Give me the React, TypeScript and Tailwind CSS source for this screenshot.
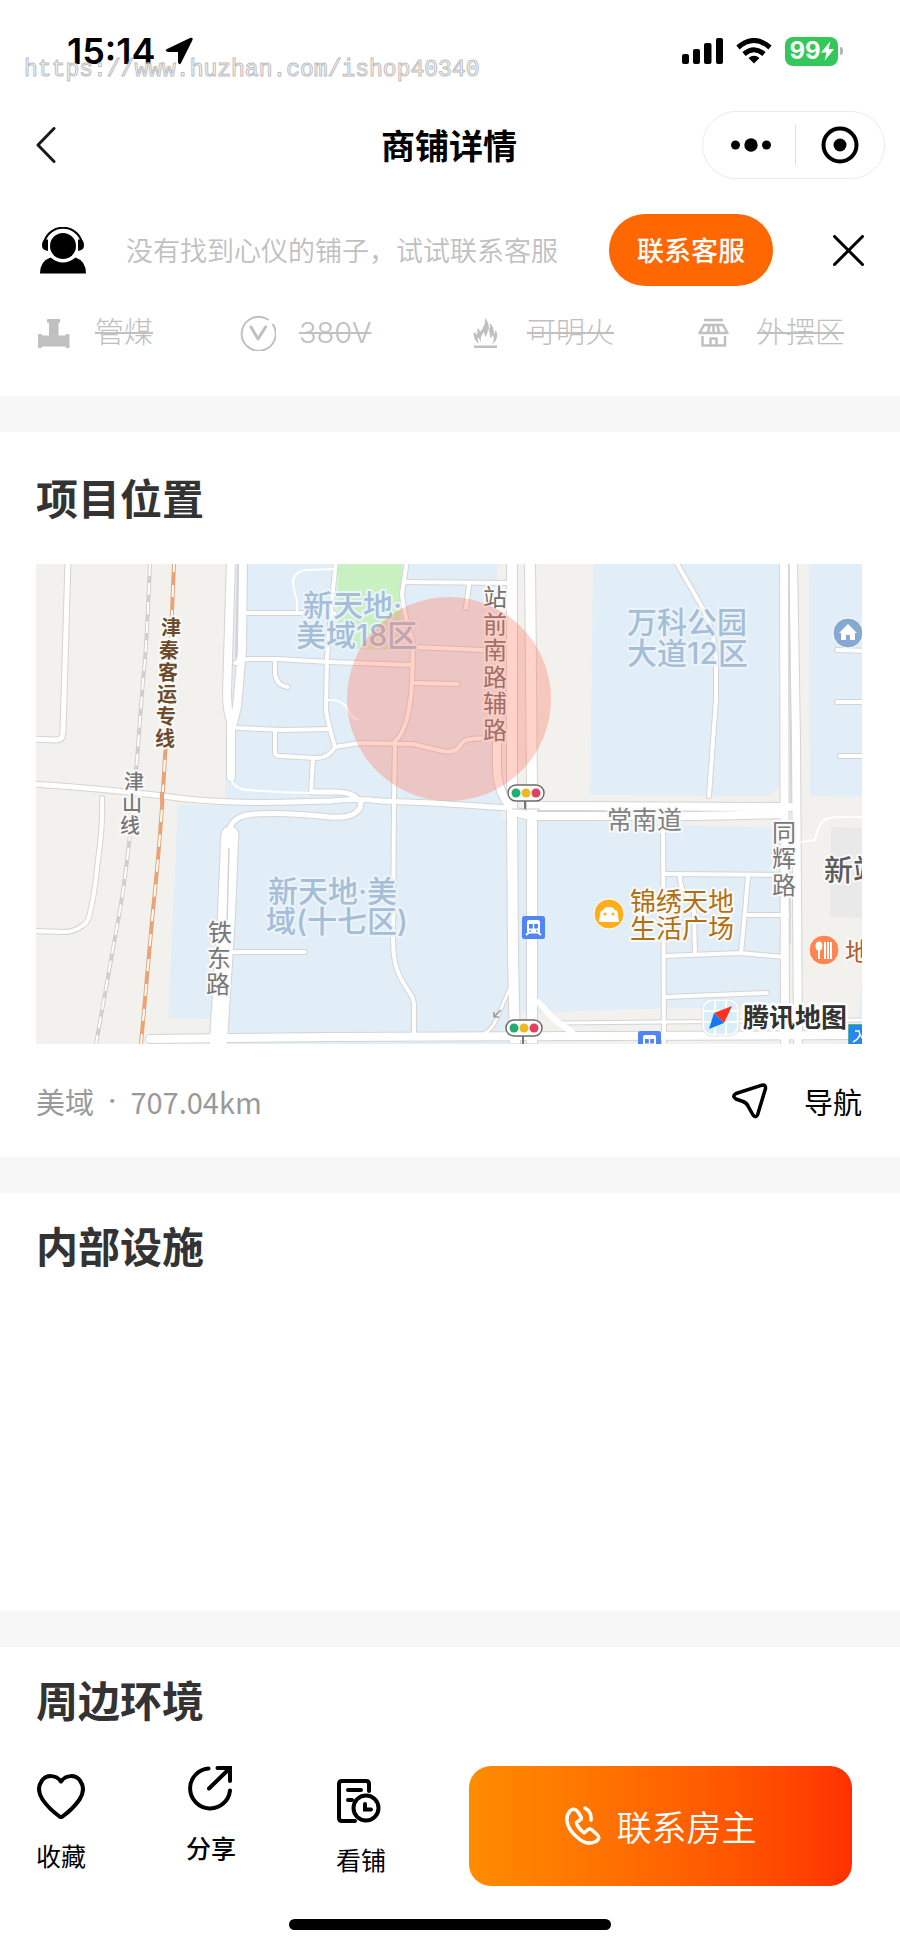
import React from "react";

type Road = { d: string; w: number };

const ROADS: Road[] = [
  { d: "M32 -4L27 168Q27 176 20 176L-4 175", w: 5 },
  { d: "M66 234Q67 262 62 296Q59 328 54 349Q52 359 46 362Q38 368 28 368L-4 367", w: 4 },
  { d: "M-4 220C60 224 110 230 127 232C180 240 230 239 294 237Q324 234 345 237L397 239L473 244", w: 5 },
  { d: "M193 268Q195 252 218 250Q250 248 294 253Q324 255 325 239Q318 227 297 228L276 228", w: 5 },
  { d: "M211 49H298", w: 4 },
  { d: "M199 99Q205 95 216 95H241L294 98L374 101", w: 4 },
  { d: "M239 98V110Q241 122 252 123", w: 4 },
  { d: "M201 164L247 166L294 165", w: 4 },
  { d: "M239 166V188Q239 192 244 192L279 194Q292 195 299 183L324 179L377 180L406 187Q420 190 425 180Q429 175 435 175L450 174", w: 4 },
  { d: "M277 196L275 228", w: 4 },
  { d: "M300 -4L297 26L291 93L290 145Q291 156 299 183", w: 4 },
  { d: "M371 -4L366 30Q368 50 377 79L376 119Q373 166 359 177L358 236L357 376Q357 400 365 415L375 431Q378 435 378 443V470", w: 4 },
  { d: "M368 18L474 19", w: 4 },
  { d: "M433 21L430 44", w: 4 },
  { d: "M377 83L448 86", w: 4 },
  { d: "M377 119L422 120", w: 4 },
  { d: "M461 174V206Q462 228 474 242", w: 8 },
  { d: "M474 424L460 456Q456 466 447 470", w: 3 },
  { d: "M197 388H269", w: 4 },
  { d: "M195 -4L191 128Q191 148 195 156V213", w: 8 },
  { d: "M207 -4L206 86L201 143L196 163", w: 8 },
  { d: "M194 271Q193 280 193 290L190 360L182 484", w: 17 },
  { d: "M114 475L294 473L830 471", w: 8 },
  { d: "M524 459L830 456", w: 3 },
  { d: "M501 242L534 242L754 243", w: 8 },
  { d: "M481 248Q490 252 501 252H661L748 250", w: 8 },
  { d: "M476 -4V243L477 393L479 484", w: 10 },
  { d: "M494 -4L496 226V484", w: 10 },
  { d: "M639 -4L666 43Q680 70 680 99V136L673 232", w: 4 },
  { d: "M801 86L830 87", w: 4 },
  { d: "M801 138H830", w: 4 },
  { d: "M804 192H830", w: 4 },
  { d: "M627 256L628 484", w: 4 },
  { d: "M629 310L744 311", w: 4 },
  { d: "M644 311Q643 324 652 333Q658 340 658 350L659 390", w: 4 },
  { d: "M712 312Q709 350 705 389", w: 4 },
  { d: "M711 351H752", w: 4 },
  { d: "M629 392L704 389L748 393", w: 4 },
  { d: "M629 433L731 429", w: 4 },
  { d: "M748 -4L749 484", w: 8 },
  { d: "M757 -4L760 176L762 484", w: 8 },
];

const PATHS = [
  "M298 5L270 6Q257 8 257 19Q258 28 261 36V48",
  "M195 214Q197 225 212 226Q244 229 276 229",
  "M292 136Q306 135 311 144Q316 155 322 156",
  "M766 278L779 276Q783 258 790 255Q800 252 826 253",
];

const FEATURES = [
  { name: "管煤", icon: <GasIcon /> },
  { name: "380V", icon: <VoltIcon /> },
  { name: "可明火", icon: <FireIcon /> },
  { name: "外摆区", icon: <StallIcon /> },
];

function GasIcon() {
  return (
    <svg viewBox="0 0 36 36" className="size-9 fill-[#c0c0c0]" aria-hidden="true">
      <path d="M12 4H23Q24 4 24 5V7Q24 8 22.500 8V20.500H29.500V20Q29.500 19 30.500 19H32.500Q33.500 19 33.500 20V32Q33.500 33 32.500 33H30.500Q29.500 33 29.500 32V31.500H6V32Q6 33 5 33H3Q2 33 2 32V20Q2 19 3 19H5Q6 19 6 20V20.500H13V8Q11 8 11 7V5Q11 4 12 4Z" />
    </svg>
  );
}

function VoltIcon() {
  return (
    <svg viewBox="0 0 36 36" className="size-9 fill-none stroke-[#c0c0c0]" strokeLinecap="round" strokeLinejoin="round" aria-hidden="true">
      <path d="M33 9.500A17 17 0 1 1 28 4.500" strokeWidth="2" />
      <path d="M11 12L18 24L25.500 12" strokeWidth="3" />
    </svg>
  );
}

function FireIcon() {
  return (
    <svg viewBox="0 0 36 36" className="size-9 fill-[#c0c0c0]" aria-hidden="true">
      <path d="M11 29C7 26 5 22 6 17Q8 18 8.500 20Q9.500 19 9.500 13Q12 14 12 17Q18 10 17 3Q21 7 21 14Q22.500 13 22 8Q26 12 26 19Q27.500 18 27 15Q30 18 29 22Q28 27 24 29Q27 25 25 20Q23 24 22 22Q22 17 20 13Q20 19 17.500 22Q16.500 20 16 17Q12 21 13 27Q11 24 10 22Q9 24 11 29Z" />
      <path d="M6 30.500H29V33H6Z" />
    </svg>
  );
}

function StallIcon() {
  return (
    <svg viewBox="0 0 36 36" className="size-9 fill-none stroke-[#c0c0c0]" strokeWidth="2.500" strokeLinejoin="round" aria-hidden="true">
      <path d="M6 5H25M6 10H25L29.500 18H1.500Z" />
      <path d="M11.500 10L10 18M15.500 10V18M19.500 10L21 18M4.500 21V30.500H27V21M12.500 30V23.500H18.500V30" />
    </svg>
  );
}

function ServiceIcon() {
  return (
    <svg viewBox="0 0 46 47" className="w-[46px] shrink-0" aria-hidden="true">
      <circle cx="23" cy="19" r="13" />
      <path d="M10.500 30.500Q23 40.500 35.500 30.500Q46 34 46 46.500H0Q0 34 10.500 30.500Z" />
      <path d="M4.500 14A19.500 19.500 0 0 1 41.500 14" fill="none" stroke="#000" strokeWidth="2" />
      <path d="M4.500 12.500H8V24Q2 23 2 18.500Q2 14 4.500 12.500ZM41.500 12.500H38V24Q44 23 44 18.500Q44 14 41.500 12.500Z" />
    </svg>
  );
}

function StatusBar() {
  return (
    <div className="relative flex h-[102px] items-center justify-between pl-[67px] pr-[57px]">
      <div className="flex items-center gap-[9px]">
        <span className="font-[Inter] text-[36px] font-semibold leading-none">15:14</span>
        <svg viewBox="0 0 28 28" className="size-7" aria-hidden="true">
          <path d="M25 1Q29 0 27 4L16 26Q14 29 13 25V15H3Q-1 14 2 12Z" />
        </svg>
      </div>
      <div className="flex items-center gap-[13px]">
        <svg viewBox="0 0 41 26" className="w-[41px]" aria-hidden="true">
          <rect y="16" width="7" height="10" rx="2" />
          <rect x="11" y="11" width="7" height="15" rx="2" />
          <rect x="22" y="5" width="7.500" height="21" rx="2" />
          <rect x="34" width="7" height="26" rx="2" />
        </svg>
        <svg viewBox="0 0 36 26" className="w-9" fill="none" stroke="#000" strokeWidth="5" aria-hidden="true">
          <path d="M2 9.500Q18 -4.500 34 9.500" />
          <path d="M8 16Q18 7.500 28 16" />
          <path d="M12.500 20Q18 15.500 23.500 20L18 25.500Z" fill="#000" stroke="none" />
        </svg>
        <div className="flex items-center gap-[2px]">
          <div className="flex h-[29px] w-[53px] items-center justify-center rounded-lg bg-[#34c759] text-white">
            <span className="font-[Inter] text-[24px] font-bold leading-none">99</span>
            <svg viewBox="0 0 13 20" className="w-[13px] fill-white" aria-hidden="true">
              <path d="M9.500 0L0 11.500H5.500L3.500 20L13 8H7.500Z" />
            </svg>
          </div>
          <div className="h-2 w-[3px] rounded-r-full bg-[#b5b5b5]" />
        </div>
      </div>
      <span className="absolute left-6 top-[54px] whitespace-nowrap font-['Liberation_Mono',monospace] text-[23px] leading-8 text-transparent [-webkit-text-stroke:1px_#bdbdbd]">
        https://www.huzhan.com/ishop40340
      </span>
    </div>
  );
}

function NavBar() {
  return (
    <header className="grid h-[86px] grid-cols-[1fr_auto_1fr] items-center pl-9 pr-[15px]">
      <button aria-label="返回" className="justify-self-start">
        <svg viewBox="0 0 20 36" className="w-5" fill="none" stroke="#1a1a1a" strokeWidth="3" strokeLinecap="round" strokeLinejoin="round">
          <path d="M18 1.500L2 18L18 34.500" />
        </svg>
      </button>
      <h1 className="pr-[23px] text-[34px] font-bold leading-10">商铺详情</h1>
      <div className="flex h-[68px] w-[183px] items-center justify-self-end rounded-full border border-[#ebebeb]">
        <button aria-label="更多" className="flex flex-1 justify-center pl-1">
          <svg viewBox="0 0 40 14" className="w-10">
            <circle cx="4.500" cy="7" r="4.500" />
            <circle cx="20" cy="7" r="6.700" />
            <circle cx="35.500" cy="7" r="4.500" />
          </svg>
        </button>
        <div className="h-10 w-px bg-[#dedede]" />
        <button aria-label="关闭小程序" className="flex flex-1 justify-center">
          <svg viewBox="0 0 38 38" className="w-[38px]">
            <circle cx="19" cy="19" r="16.500" fill="none" stroke="#000" strokeWidth="4" />
            <circle cx="19" cy="19" r="6.500" />
          </svg>
        </button>
      </div>
    </header>
  );
}

// One text whose characters each get their own spot along the road
function RoadName({ text, xs, ys, size, className }: { text: string; xs: number[]; ys: number[]; size: number; className: string }) {
  const half = size / 2;
  const drop = Math.round(size * 0.37);
  return (
    <text className={className} fontSize={size} x={xs.map((x) => x - half).join(" ")} y={ys.map((y) => y + drop).join(" ")}>
      {text}
    </text>
  );
}

function TrafficLight({ x, y }: { x: number; y: number }) {
  return (
    <g transform={`translate(${x} ${y})`}>
      <path d="M-1 8V16" stroke="#777" strokeWidth="2" />
      <path d="M-14 16H14" stroke="#999" strokeWidth="1" opacity=".5" />
      <rect x="-18" y="-8" width="36" height="16" rx="8" fill="#fff" stroke="#6b6b6b" strokeWidth="1.500" />
      <circle cx="-10" r="4.500" fill="#20ae75" />
      <circle r="4.500" fill="#efb81f" />
      <circle cx="10" r="4.500" fill="#e33f5f" />
    </g>
  );
}

function BusStop({ x, y }: { x: number; y: number }) {
  return (
    <g transform={`translate(${x} ${y})`}>
      <rect width="23" height="23" rx="2.500" fill="#4f86f3" />
      <rect x="5" y="4" width="13" height="13.500" rx="2" fill="#fff" />
      <path d="M7 8H10.800V12.500H7ZM12.200 8H16V12.500H12.200Z" fill="#4f86f3" />
      <path d="M7.500 15H9M14 15H15.500" stroke="#4f86f3" strokeWidth="1.500" />
      <path d="M4 19L7 16.500M19 19L16 16.500" stroke="#fff" strokeWidth="2" />
    </g>
  );
}

function LocationMap() {
  return (
    <svg
      viewBox="0 0 826 480"
      role="img"
      aria-label="项目位置地图"
      className="block h-auto w-full bg-[#f2f1ed] font-[Inter,'Noto_Sans_CJK_SC',sans-serif]"
    >
      {/* blocks */}
      <g fill="#e2eef7">
        <path d="M196 0H461L466 240L465 254L480 256V480H193V469L174 455L132 454L142 241H189L190 160Z" />
        <path d="M480 256H534L647 261L744 264V441L666 444L564 446L501 449H462Z" />
        <path d="M557 0H744V224L731 232L554 231Z" />
        <path d="M773 0H826V233L774 232Z" />
        <path d="M826 412V458H822Z" />
      </g>
      <path d="M465 254L484 256L472 232Z" fill="#f2f1ed" />
      <path d="M302 0H366L364 86L302 84Z" fill="#c8f1c2" />
      <path d="M795 263L826 264V354L794 353Z" fill="#e9e9e9" />

      {/* railways */}
      <g fill="none">
        <path d="M114 0L112 43Q110 90 107 116L101 196L96 246Q93 290 84 346Q78 378 60 480" stroke="#cfcfcf" strokeWidth="4" />
        <path d="M114 0L112 43Q110 90 107 116L101 196L96 246Q93 290 84 346Q78 378 60 480" stroke="#fff" strokeWidth="2" strokeDasharray="12 7" />
        <path d="M138 0L132 143L126 243Q122 300 117 346L105 480" stroke="#e8a474" strokeWidth="4" />
        <path d="M138 0L132 143L126 243Q122 300 117 346L105 480" stroke="#fff" strokeWidth="2" strokeDasharray="12 13" strokeDashoffset="4" />
      </g>

      {/* roads: casing first, then the surface */}
      <g fill="none" stroke="#d3d4d3" strokeLinejoin="round" strokeLinecap="round">
        {ROADS.map((r) => (
          <path key={r.d} d={r.d} strokeWidth={r.w + 2} />
        ))}
      </g>
      <g fill="none" stroke="#fff" strokeLinejoin="round" strokeLinecap="round">
        {ROADS.map((r) => (
          <path key={r.d} d={r.d} strokeWidth={r.w} />
        ))}
        {PATHS.map((d) => (
          <path key={d} d={d} strokeWidth="2" />
        ))}
        <path d="M502 438L519 456L536 468" strokeWidth="6" />
      </g>
      <g fill="none" stroke="#d3d4d3">
        <path d="M193 284L191 360" strokeWidth="1.500" />
        <path d="M202 0L200 94" strokeWidth="2" />
        <path d="M753 0L755 238M754 260V380" strokeWidth="1.500" />
        <path d="M126 228V238" stroke="#e8a474" strokeWidth="4" />
      </g>
      <path d="M458 453L465 446M458 453V448M458 453H463" stroke="#999" strokeWidth="1.500" fill="none" />

      {/* labels */}
      <g className="[paint-order:stroke]" strokeLinejoin="round">
        <g className="fill-[#a5bed8] stroke-[#ecf4fa] font-medium" strokeWidth="4" fontSize="30">
          <text x="267" y="52">新天地·</text>
          <text x="260" y="82">美域18区</text>
          <text x="591" y="69">万科公园</text>
          <text x="591" y="100">大道12区</text>
          <text x="232" y="338">新天地·美</text>
          <text x="230" y="368">域(十七区)</text>
        </g>
        <g strokeWidth="4" stroke="#fafafa">
          <RoadName
            text="津秦客运专线"
            size={20}
            className="fill-[#6d4c2c] font-bold"
            xs={[135, 133, 132, 131, 130, 129]}
            ys={[64, 87, 109, 131, 153, 175]}
          />
          <RoadName text="津山线" size={20} className="fill-[#777] font-medium" xs={[98, 96, 94]} ys={[218, 240, 262]} />
          <RoadName text="铁东路" size={24} className="fill-[#777]" xs={[184, 183, 182]} ys={[368, 394, 420]} />
          <RoadName
            text="站前南路辅路"
            size={24}
            className="fill-[#737373]"
            xs={[459, 459, 459, 459, 459, 459]}
            ys={[33, 60, 86, 113, 139, 166]}
          />
          <RoadName text="同辉路" size={24} className="fill-[#777]" xs={[748, 748, 748]} ys={[268, 294, 321]} />
          <text x="571" y="265" fontSize="25" fill="#808080">常南道</text>
          <g fontSize="26" fill="#b0700f">
            <text x="594" y="347">锦绣天地</text>
            <text x="594" y="374">生活广场</text>
          </g>
          <text x="788" y="317" fontSize="29" fill="#5c5c5c" className="font-medium">新站</text>
          <text x="809" y="397" fontSize="25" fill="#b35b33">地铁</text>
        </g>
      </g>

      <circle cx="413" cy="135" r="102" fill="#ff694e" opacity=".3" />

      {/* points of interest */}
      <g stroke="#fff" strokeWidth="1">
        <circle cx="573" cy="350" r="15" fill="#fcae1c" />
        <circle cx="812" cy="69" r="15" fill="#86a9d1" />
        <circle cx="788" cy="386" r="15" fill="#ff8650" />
      </g>
      <path d="M564.500 348Q565 346 567.500 346Q568 343 573 343Q578 343 578.500 346Q581 346 581.500 348L583 358H563Z" fill="#fff" />
      <circle cx="569" cy="350" r="1.500" fill="#fcae1c" />
      <circle cx="577" cy="350" r="1.500" fill="#fcae1c" />
      <path d="M803 69L812 60L821 69H819V76H814V71H810V76H805V69Z" fill="#fff" />
      <ellipse cx="783" cy="382" rx="3.500" ry="4.500" fill="#fff" />
      <path d="M783 382V395M789 378V395M792 378V395M795 378V395" stroke="#fff" strokeWidth="2" />
      <TrafficLight x={490} y={229} />
      <TrafficLight x={488} y={464} />
      <BusStop x={486} y={352} />
      <BusStop x={602} y={467} />
      <g>
        <rect x="813" y="461" width="24" height="24" fill="#2886ef" stroke="#159c9c" strokeWidth="1.500" />
        <path d="M819 467H823Q824 474 831 477M824 470Q823 475 817 478" fill="none" stroke="#fff" strokeWidth="1.500" />
      </g>

      {/* map provider */}
      <rect x="666" y="435" width="37" height="37" rx="10" fill="#fff" stroke="#e2e2e2" strokeWidth="1" />
      <rect x="668" y="437" width="33" height="33" rx="8" fill="#d9eefb" />
      <path d="M668 447H701M679 437V470M690 437V470M668 458H701" stroke="#fff" strokeWidth="2" />
      <path d="M696 442L688 459L678 449Z" fill="#ff3120" />
      <path d="M673 465L678 449L688 459Z" fill="#1677f2" />
      <text x="707" y="463" fontSize="26" fill="#333" stroke="#fff" strokeWidth="5" strokeLinejoin="round" className="font-bold [paint-order:stroke]">
        腾讯地图
      </text>
    </svg>
  );
}

function SectionTitle({ children }: { children: React.ReactNode }) {
  return <h2 className="text-[42px] font-bold leading-[58px] text-[#333]">{children}</h2>;
}

export default function App() {
  return (
    <div className="w-full bg-white font-['Noto_Sans_CJK_SC',sans-serif] text-black">
      <StatusBar />
      <NavBar />

      <div className="flex items-center pl-10 pr-9 pt-[26px]">
        <ServiceIcon />
        <p className="ml-10 flex-1 whitespace-nowrap text-[27px] font-[350] leading-10 text-[#c0c0c0]">
          没有找到心仪的铺子，试试联系客服
        </p>
        <button className="h-[72px] w-[164px] shrink-0 rounded-[36px] bg-[#ff6700] text-[27px] font-medium text-white">
          联系客服
        </button>
        <button aria-label="关闭" className="ml-[60px] shrink-0">
          <svg viewBox="0 0 31 31" className="w-[31px]" stroke="#000" strokeWidth="3" strokeLinecap="round">
            <path d="M1.500 1.500L29.500 29.500M29.500 1.500L1.500 29.500" />
          </svg>
        </button>
      </div>

      <ul className="grid grid-cols-[204fr_228fr_230fr_166fr] pb-[43px] pl-9 pr-9 pt-[27px]">
        {FEATURES.map((f) => (
          <li key={f.name} className="flex items-center gap-[23px] whitespace-nowrap">
            {f.icon}
            <span className="font-[Inter,'Noto_Sans_CJK_SC',sans-serif] text-[29px] font-light leading-10 text-[#c0c0c0] line-through">
              {f.name}
            </span>
          </li>
        ))}
      </ul>

      <section className="border-t-[36px] border-[#f7f7f7] pl-9 pr-[38px] pt-9">
        <SectionTitle>项目位置</SectionTitle>
        <div className="mt-[38px]">
          <LocationMap />
        </div>
        <div className="flex h-[113px] items-center justify-between text-[29px] leading-10">
          <p className="flex items-center gap-[14px] text-[#999]">
            <span>美域</span>
            <span className="font-[Inter]">·</span>
            <span>707.04km</span>
          </p>
          <button className="flex items-center gap-9">
            <svg viewBox="0 0 36 36" className="size-9" fill="none" stroke="#000" strokeWidth="3.500" strokeLinejoin="round" aria-hidden="true">
              <path d="M4 10.500L30 2.200Q34 1.500 33.500 5.500L25.500 32Q23.500 35.500 21 32L16.500 24Q15 20 11 18.500L4 16Q-.5 13 4 10.500Z" />
            </svg>
            导航
          </button>
        </div>
      </section>

      <section className="min-h-[454px] border-t-[36px] border-[#f7f7f7] px-9 pt-[23px]">
        <SectionTitle>内部设施</SectionTitle>
      </section>

      <section className="border-t-[36px] border-[#f7f7f7] px-9 pt-[23px]">
        <SectionTitle>周边环境</SectionTitle>
      </section>

      <footer className="pb-[17px] pt-[38px]">
        <div className="flex items-start pl-9 pr-12">
          <div className="flex items-start gap-[100px] whitespace-nowrap text-[25px] leading-8">
            <button className="flex flex-col items-center gap-5 pt-2">
              <svg viewBox="0 0 48 45" className="w-12" fill="none" stroke="#000" strokeWidth="4" strokeLinejoin="round" aria-hidden="true">
                <path d="M24 7.500C19 .5 9.500.5 5 6.500C.8 12.500 1.500 19.500 5.500 25.500C10 32 17 38.500 22.500 42.500Q24 43.500 25.500 42.500C31 38.500 38 32 42.500 25.500C46.500 19.500 47.200 12.500 43 6.500C38.500.5 29 .5 24 7.500Z" />
              </svg>
              收藏
            </button>
            <button className="flex flex-col items-center gap-5 font-medium">
              <svg viewBox="0 0 48 45" className="w-12" fill="none" stroke="#000" strokeWidth="4" strokeLinecap="round" aria-hidden="true">
                <path d="M21.500 2.500A20 20 0 1 0 43 24.500" />
                <path d="M22 22.500L41.500 3.500M30.500 2H43V15" />
              </svg>
              分享
            </button>
            <button className="flex flex-col items-center gap-5 pt-3">
              <svg viewBox="0 0 48 45" className="w-12" fill="none" stroke="#000" strokeWidth="4" strokeLinecap="round" aria-hidden="true">
                <path d="M18 43H5Q2 43 2 40V6Q2 3 5 3H29Q32 3 32 6V13" />
                <path d="M11 12H24M11 22H15" />
                <circle cx="29" cy="30" r="12.500" />
                <path d="M28 26V31.500H34" />
              </svg>
              看铺
            </button>
          </div>
          <button className="ml-[83px] flex h-[120px] flex-1 items-center justify-center gap-4 whitespace-nowrap rounded-[22px] bg-linear-to-r from-[#ff8c00] to-[#ff3000] text-[35px] font-[350] text-white">
            <svg viewBox="0 0 36 40" className="w-9" fill="none" stroke="#fff" strokeWidth="3.500" strokeLinecap="round" strokeLinejoin="round" aria-hidden="true">
              <path d="M5 5Q9 1 13 6L16 11Q17 13 15 14L11.500 16.500Q12 21 19 27L22.500 24Q25 22 27 24L32 28.500Q36 32 31 35.500Q22 40 13 32Q3 24 2 15Q1.500 9 5 5Z" />
              <path d="M20 2Q27 6 26 14" />
            </svg>
            联系房主
          </button>
        </div>
        <div className="mx-auto mt-[33px] h-[11px] w-[322px] rounded-full bg-black" />
      </footer>
    </div>
  );
}
